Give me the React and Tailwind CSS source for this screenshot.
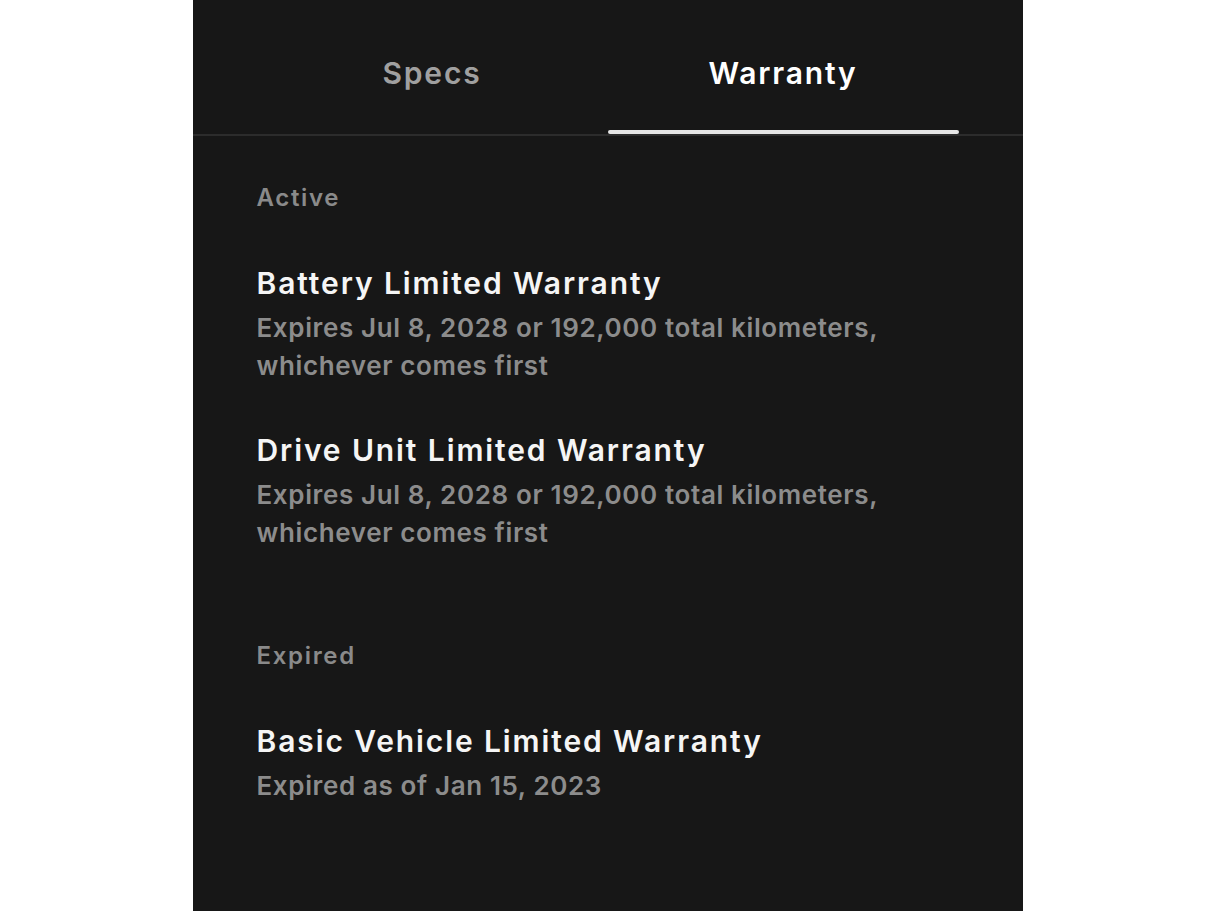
import React from 'react';

const sections = [
  {
    label: 'Active',
    items: [
      {
        title: 'Battery Limited Warranty',
        detail: 'Expires Jul 8, 2028 or 192,000 total kilometers, whichever comes first',
      },
      {
        title: 'Drive Unit Limited Warranty',
        detail: 'Expires Jul 8, 2028 or 192,000 total kilometers, whichever comes first',
      },
    ],
  },
  {
    label: 'Expired',
    items: [
      {
        title: 'Basic Vehicle Limited Warranty',
        detail: 'Expired as of Jan 15, 2023',
      },
    ],
  },
];

const App = () => {
  return (
    <div className="min-h-screen bg-white flex justify-center font-['Inter','Liberation_Sans',sans-serif]">
      <div className="w-[830px] min-h-screen bg-[#171717]">
        {/* Tabs */}
        <div className="border-b-2 border-[#2c2c2c]">
          <div className="flex px-16">
            <button className="flex-1 h-[134px] pt-[51px] flex items-start justify-center text-[30px] leading-[45px] font-semibold tracking-[0.06em] text-[#a0a0a0]">
              Specs
            </button>
            <button className="flex-1 h-[134px] pt-[51px] flex items-start justify-center text-[30px] leading-[45px] font-semibold tracking-[0.06em] text-white relative">
              Warranty
              <span className="absolute left-0 right-0 bottom-0 h-1 rounded-full bg-[#e6e6e6]" />
            </button>
          </div>
        </div>

        {/* Content */}
        <div className="px-16 pt-[46px]">
          {sections.map((section, i) => (
            <div key={section.label} className={i > 0 ? 'mt-[88px]' : ''}>
              <div className="text-[24px] leading-[32px] font-semibold tracking-[0.07em] text-[#8a8a8a]">
                {section.label}
              </div>
              <div className="mt-[49px] flex flex-col gap-[45px]">
                {section.items.map((item) => (
                  <div key={item.title}>
                    <div className="text-[30px] leading-[40px] font-semibold tracking-[0.063em] text-[#f5f5f5]">
                      {item.title}
                    </div>
                    <div className="mt-[6px] max-w-[660px] text-[26px] leading-[38px] font-semibold tracking-[0.024em] text-[#8c8c8c]">
                      {item.detail}
                    </div>
                  </div>
                ))}
              </div>
            </div>
          ))}
        </div>
      </div>
    </div>
  );
};

export default App;
